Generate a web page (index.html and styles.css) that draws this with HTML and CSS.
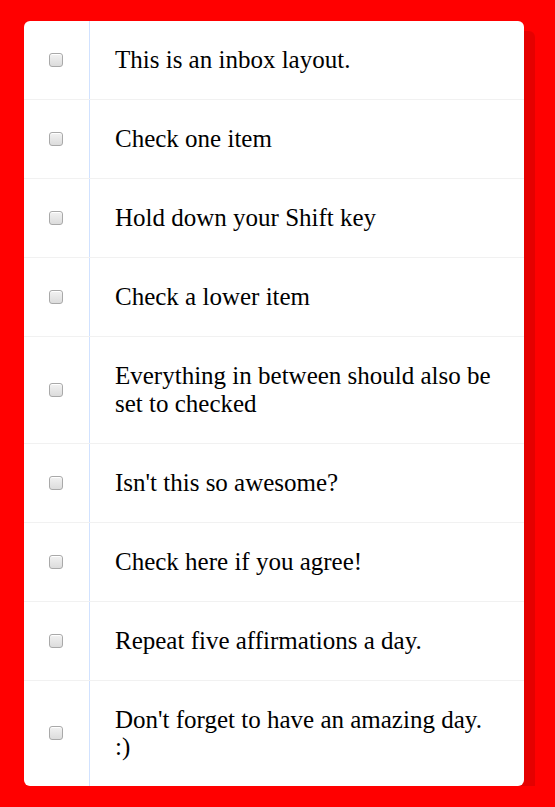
FILE: index.html
```html
<!DOCTYPE html>
<html>
<head>
<meta charset="utf-8">
<link rel="stylesheet" href="styles.css">
</head>
<body>
<div class="inbox">
  <div class="item"><input type="checkbox"><p>This is an inbox layout.</p></div>
  <div class="item"><input type="checkbox"><p>Check one item</p></div>
  <div class="item"><input type="checkbox"><p>Hold down your Shift key</p></div>
  <div class="item"><input type="checkbox"><p>Check a lower item</p></div>
  <div class="item"><input type="checkbox"><p>Everything in between should also be set to checked</p></div>
  <div class="item"><input type="checkbox"><p>Isn't this so awesome?</p></div>
  <div class="item"><input type="checkbox"><p>Check here if you agree!</p></div>
  <div class="item"><input type="checkbox"><p>Repeat five affirmations a day.</p></div>
  <div class="item"><input type="checkbox"><p>Don't forget to have an amazing day. :)</p></div>
</div>
</body>
</html>
```

FILE: styles.css
```css
html {
  background: #ff0000;
}
body {
  margin: 0;
  padding: 21px 0 0 24px;
  font-family: "Liberation Serif", "Times New Roman", serif;
}
.inbox {
  width: 500px;
  background: #fff;
  border-radius: 6px;
  box-shadow: 11px 10px 0 rgba(0, 0, 0, 0.1);
}
.item {
  display: flex;
  align-items: center;
  border-bottom: 1px solid #f1f1f1;
}
.item:last-child {
  border-bottom: 0;
}
.item input {
  -webkit-appearance: none;
  appearance: none;
  flex: none;
  box-sizing: border-box;
  width: 14px;
  height: 14px;
  margin: 0 26px 0 25px;
  border: 1px solid #a9a9a9;
  border-radius: 3px;
  background: linear-gradient(#f2f2f2, #dcdcdc);
  box-shadow: inset 0 1px 0 #fff;
}
.item p {
  margin: 0;
  padding: 25.25px 25px;
  flex: 1;
  font-size: 25px;
  color: #000;
  line-height: 27.5px;
  border-left: 1px solid #d1e2ff;
}
```
